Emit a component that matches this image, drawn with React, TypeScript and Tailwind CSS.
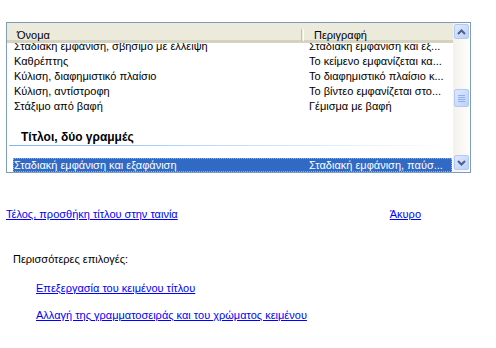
const rows = [
  { name: "Σταδιακή εμφάνιση, σβήσιμο με έλλειψη", desc: "Σταδιακή εμφάνιση και εξ..." },
  { name: "Καθρέπτης", desc: "Το κείμενο εμφανίζεται κα..." },
  { name: "Κύλιση, διαφημιστικό πλαίσιο", desc: "Το διαφημιστικό πλαίσιο κ..." },
  { name: "Κύλιση, αντίστροφη", desc: "Το βίντεο εμφανίζεται στο..." },
  { name: "Στάξιμο από βαφή", desc: "Γέμισμα με βαφή" },
];

function Arrow({ up }: { up?: boolean }) {
  return (
    <svg width="9" height="6" viewBox="0 0 9 6">
      <path
        d={up ? "M1 5 L4.5 1.5 L8 5" : "M1 1 L4.5 4.5 L8 1"}
        fill="none"
        stroke="#4d6185"
        strokeWidth="2"
      />
    </svg>
  );
}

function ScrollButton({ children, className }: { children: React.ReactNode; className?: string }) {
  return (
    <div
      className={`h-[15px] w-[15px] rounded-[2px] border border-[#b4c8f6] bg-gradient-to-br from-[#dfe9fd] to-[#bcd0f8] flex items-center justify-center ${className ?? ""}`}
    >
      {children}
    </div>
  );
}

export default function App() {
  return (
    <div className="w-[496px] h-[348px] bg-white text-black text-[11px] font-['Liberation_Sans',sans-serif] overflow-hidden">
      <div className="ml-[6px] mt-[22px] w-[465px] h-[151px] border border-[#7f9db9] flex">
        <div className="flex-1 flex flex-col min-w-0">
          {/* column header */}
          <div className="h-[20px] shrink-0 bg-[#ebeadb] border-b-[3px] border-[#d6d2c2] flex items-start pt-[6px] leading-[13px] relative z-10">
            <div className="w-[294px] pl-[10px]">Όνομα</div>
            <div className="h-[12px] w-px bg-[#c7c5b2] mr-[1px]" />
            <div className="h-[12px] w-px bg-white" />
            <div className="pl-[10px]">Περιγραφή</div>
          </div>
          <div className="flex-1 overflow-hidden relative">
            <div className="mt-[-4px]">
              {rows.map((r) => (
                <div key={r.name} className="h-[15px] leading-[15px] flex whitespace-nowrap">
                  <div className="w-[295px] pl-[7px]">{r.name}</div>
                  <div className="pl-[7px]">{r.desc}</div>
                </div>
              ))}
              <div className="h-[15px]" />
              <div className="h-[16px] leading-[16px] pl-[14px] font-bold text-[12px]">Τίτλοι, δύο γραμμές</div>
              <div className="h-px ml-[2px] bg-gradient-to-r from-[#7fb4f5] via-[#c4dcfb] to-white" />
              <div className="h-[12px]" />
              <div className="ml-[6px] mr-[1px] h-[14px] leading-[12px] bg-[#316ac5] text-white border border-dotted border-[#e4a84a] flex whitespace-nowrap">
                <div className="w-[288px]">Σταδιακή εμφάνιση και εξαφάνιση</div>
                <div className="pl-[7px]">Σταδιακή εμφάνιση, παύσ...</div>
              </div>
            </div>
          </div>
        </div>
        {/* scrollbar */}
        <div className="w-[17px] shrink-0 bg-gradient-to-r from-[#f3f1ec] to-[#fefefb] flex flex-col items-center py-[1px]">
          <ScrollButton><Arrow up /></ScrollButton>
          <div className="flex-1 w-full flex flex-col items-center pt-[50px]">
            <ScrollButton className="h-[18px]">
              <div className="flex flex-col gap-[1px]">
                <div className="h-px w-[7px] bg-[#8eb0f0]" />
                <div className="h-px w-[7px] bg-[#8eb0f0]" />
                <div className="h-px w-[7px] bg-[#8eb0f0]" />
                <div className="h-px w-[7px] bg-[#8eb0f0]" />
              </div>
            </ScrollButton>
          </div>
          <ScrollButton className="mb-[1px]"><Arrow /></ScrollButton>
        </div>
      </div>

      <div className="mt-[33px] ml-[6px] w-[415px] flex justify-between leading-[16px]">
        <a href="#" className="text-[#0000ff] underline">Τέλος, προσθήκη τίτλου στην ταινία</a>
        <a href="#" className="text-[#0000ff] underline">Άκυρο</a>
      </div>

      <div className="mt-[29px] ml-[13px] leading-[16px]">Περισσότερες επιλογές:</div>
      <div className="ml-[36px] mt-[13px] flex flex-col gap-[11px] leading-[16px]">
        <a href="#" className="text-[#0000ff] underline">Επεξεργασία του κειμένου τίτλου</a>
        <a href="#" className="text-[#0000ff] underline">Αλλαγή της γραμματοσειράς και του χρώματος κειμένου</a>
      </div>
    </div>
  );
}
